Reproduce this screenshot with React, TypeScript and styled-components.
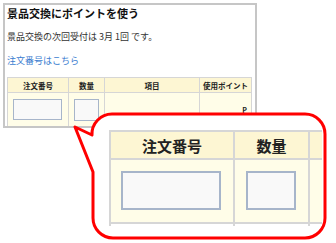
import React, { FC, ReactElement } from 'react';
import styled, { createGlobalStyle } from 'styled-components';

const GlobalStyle = createGlobalStyle`
  html, body {
    margin: 0;
    padding: 0;
    background: #ffffff;
  }

  body {
    font-family: "Noto Sans CJK JP", "Noto Sans", sans-serif;
    color: #222222;
  }
`;

interface GridProps {
  cols: string;
  line: number;
};

interface CellProps {
  line: number;
  head?: boolean;
  blank?: boolean;
  h: number;
};

interface FieldProps {
  w: number;
  h: number;
  line: number;
  ml: number;
  mt: number;
};

const Page = styled.div`
  position: relative;
  width: 336px;
  height: 243px;
  overflow: hidden;
  padding: 3px 0 0 3px;
  box-sizing: border-box;
`;

const Panel = styled.div`
  width: 254px;
  height: 125px;
  box-sizing: border-box;
  border: 2px solid #c6c6c6;
  padding: 0 0 0 2px;
  overflow: hidden;
`;

const Title = styled.h1`
  margin: 0;
  font-size: 11px;
  line-height: 16px;
  font-weight: 700;
  color: #111111;
`;

const Notice = styled.p`
  margin: 10px 0 0;
  font-size: 9px;
  line-height: 12px;
  color: #333333;
`;

const OrderLink = styled.a`
  display: block;
  margin: 12px 0 0;
  font-size: 9px;
  line-height: 12px;
  color: #3b7dd0;
  text-decoration: none;
`;

const Grid = styled.div<GridProps>`
  display: grid;
  grid-template-columns: ${({ cols }) => cols};
  border-left: ${({ line }) => line}px solid #d6d6d6;
  border-top: ${({ line }) => line}px solid #d6d6d6;
  box-sizing: border-box;
`;

const PanelGrid = styled(Grid)`
  margin-top: 10px;
  width: 245px;
`;

const Cell = styled.div<CellProps>`
  box-sizing: border-box;
  height: ${({ h }) => h}px;
  border-right: ${({ line }) => line}px solid #d6d6d6;
  border-bottom: ${({ line }) => line}px solid #d6d6d6;
  background: ${({ head, blank }) => (blank ? '#ffffff' : head ? '#fdf6d3' : '#fffde8')};
`;

const HeadText = styled.div<{ size: number }>`
  display: flex;
  align-items: center;
  justify-content: center;
  height: 100%;
  font-size: ${({ size }) => size}px;
  font-weight: 700;
  color: #222222;
  white-space: nowrap;
`;

const Field = styled.div<FieldProps>`
  box-sizing: border-box;
  width: ${({ w }) => w}px;
  height: ${({ h }) => h}px;
  margin: ${({ mt, ml }) => `${mt}px 0 0 ${ml}px`};
  border: ${({ line }) => line}px solid #a7b5ca;
  background: #f9f9f9;
`;

const PointUnit = styled.div`
  text-align: right;
  padding: 13px 4px 0 0;
  font-size: 7px;
  font-weight: 700;
  line-height: 8px;
  color: #222222;
`;

const Callout = styled.div`
  position: absolute;
  left: 70px;
  top: 110px;
  width: 260px;
  height: 132px;
  padding: 20px 0 0 39px;
  box-sizing: border-box;
`;

const Bubble = styled.svg`
  position: absolute;
  left: 0;
  top: 0;
  width: 260px;
  height: 132px;
`;

const ZoomClip = styled.div`
  position: relative;
  width: 213px;
  height: 96px;
  overflow: hidden;
`;

const ZoomGrid = styled(Grid)`
  width: 260px;
`;

const App: FC = (): ReactElement =>
  <Page>
    <GlobalStyle />
    <Panel>
      <Title>景品交換にポイントを使う</Title>
      <Notice>景品交換の次回受付は 3月 1回 です。</Notice>
      <OrderLink href="#">注文番号はこちら</OrderLink>
      <PanelGrid cols="61px 36px 95px 52px" line={1}>
        <Cell line={1} h={15} head><HeadText size={7.5}>注文番号</HeadText></Cell>
        <Cell line={1} h={15} head><HeadText size={7.5}>数量</HeadText></Cell>
        <Cell line={1} h={15} head><HeadText size={7.5}>項目</HeadText></Cell>
        <Cell line={1} h={15} head><HeadText size={7.5}>使用ポイント</HeadText></Cell>
        <Cell line={1} h={40}><Field w={49} h={21} line={1} ml={5} mt={6} /></Cell>
        <Cell line={1} h={40}><Field w={25} h={22} line={1} ml={5} mt={6} /></Cell>
        <Cell line={1} h={40} />
        <Cell line={1} h={40}><PointUnit>P</PointUnit></Cell>
      </PanelGrid>
    </Panel>
    <Callout>
      <Bubble viewBox="0 0 260 132">
        <path
          d="M 42 4 H 235 A 20 20 0 0 1 255 24 V 108 A 20 20 0 0 1 235 128 H 43 A 20 20 0 0 1 23 108 V 62 L 5 17 L 22 25 A 20 20 0 0 1 42 4 Z"
          fill="#ffffff"
          stroke="#ff0000"
          strokeWidth="3"
          strokeLinejoin="round"
        />
      </Bubble>
      <ZoomClip>
        <ZoomGrid cols="124px 75px 1fr" line={2}>
          <Cell line={2} h={28} head><HeadText size={15}>注文番号</HeadText></Cell>
          <Cell line={2} h={28} head><HeadText size={15}>数量</HeadText></Cell>
          <Cell line={2} h={28} head />
          <Cell line={2} h={64}><Field w={100} h={39} line={2} ml={10} mt={11} /></Cell>
          <Cell line={2} h={64}><Field w={50} h={39} line={2} ml={11} mt={11} /></Cell>
          <Cell line={2} h={64} />
          <Cell line={2} h={20} blank />
          <Cell line={2} h={20} blank />
          <Cell line={2} h={20} blank />
        </ZoomGrid>
      </ZoomClip>
    </Callout>
  </Page>

export default App;
